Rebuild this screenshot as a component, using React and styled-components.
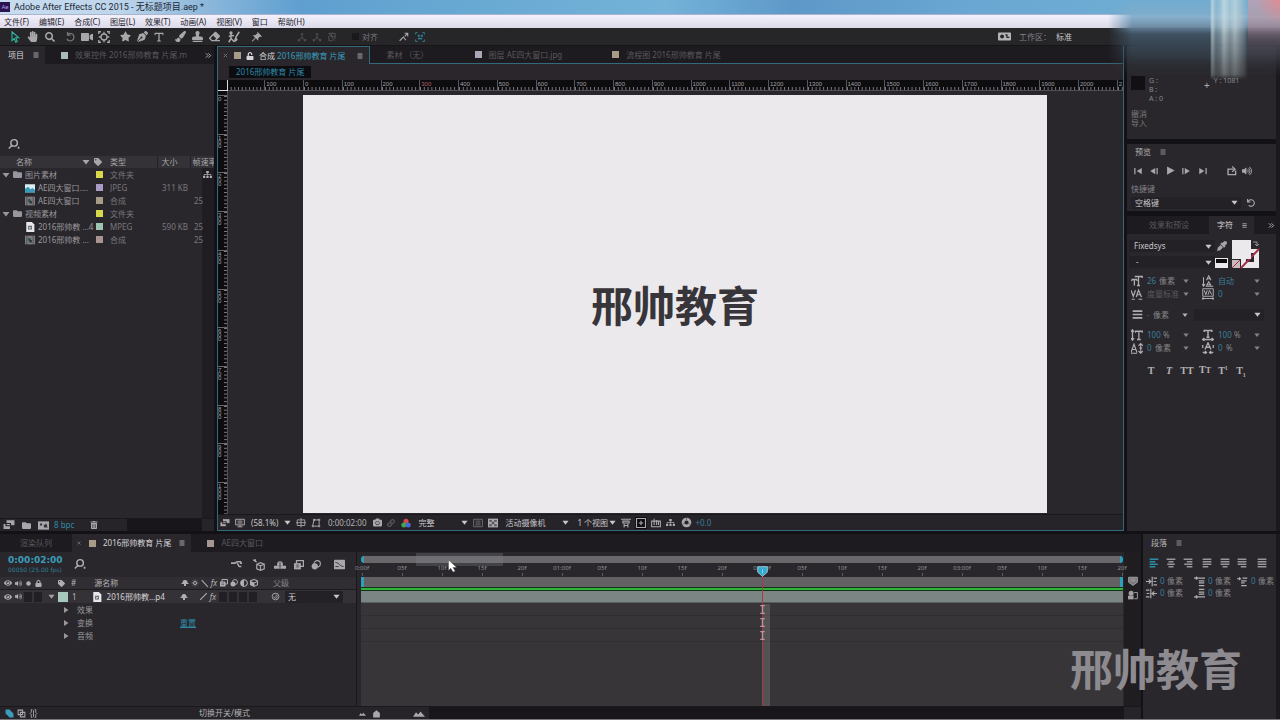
import React from "react";
import styled, { createGlobalStyle, css } from "styled-components";
import {
  FaHandPaper, FaSearch, FaStar, FaPenNib, FaPaintBrush, FaStamp, FaEraser, FaThumbtack, FaVideo,
  FaFolder, FaTrashAlt, FaVolumeUp, FaEye, FaTag, FaLock, FaUnlock, FaCamera, FaSitemap, FaCube,
  FaEyeDropper, FaUndo, FaLink, FaAdjust,
} from "react-icons/fa";

const c = {
  panel: "#29272b",
  tabs: "#1d1b1f",
  gap: "#121115",
  line: "#1b191d",
  text: "#b4b2b6",
  bright: "#d6d4d8",
  dim: "#5a585c",
  mid: "#858387",
  teal: "#3a9dbb",
  edge: "#34697c",
  track: "#373538",
};

const Global = createGlobalStyle`
  * { box-sizing: border-box; }
  body { margin: 0; background: ${c.gap}; }
  body, button, input, select {
    font-family: "Noto Sans", "Noto Sans CJK SC", sans-serif;
    font-size: 8px;
    line-height: 12px;
    color: ${c.text};
  }
  button, input, select { margin: 0; padding: 0; border: 0; background: none; outline: none; }
  svg { display: block; flex: none; }
`;

const Page = styled.div`
  position: relative;
  display: flex;
  flex-direction: column;
  min-height: 100vh;
  overflow: hidden;
  border-bottom: 1px solid #77757a;
`;

const TitleBar = styled.header`
  display: flex;
  align-items: center;
  gap: 4px;
  height: 14px;
  color: #1c2836;
  font-family: Roboto, "Noto Sans CJK SC", sans-serif;
  font-size: 9px;
  white-space: nowrap;
  background: linear-gradient(90deg, #c8dcef 0, #bdd5eb 120px, #8fb9dc 200px, #5f9fd0 300px, #69aad3 38%, #74b2d8 52%, #5e98c9 62%, #6aa7d2 76%, #72b2d6 100%);
`;
const AppBadge = styled.span`
  width: 10px;
  height: 10px;
  margin-bottom: 1px;
  background: #2a1450;
  color: #b49be6;
  font-size: 6px;
  line-height: 10px;
  text-align: center;
`;
const MenuBar = styled.nav`
  display: flex;
  align-items: center;
  gap: 10px;
  height: 14px;
  padding-left: 4px;
  border-top: 1px solid #aab4d0;
  background: linear-gradient(#f2f1fb, #dcd9e9);
`;
const MenuItem = styled.button`
  color: #26242c;
  white-space: nowrap;
`;

const ToolBar = styled.div`
  display: flex;
  align-items: center;
  height: 18px;
  padding-left: 6px;
  background: #262528;
  border-bottom: 1px solid #151417;
`;
const IconButton = styled.button`
  flex: none;
  display: flex;
  align-items: center;
  justify-content: center;
  width: ${(p) => p.$w || 16}px;
  height: 12px;
  color: ${(p) => p.$color || "#a9a7ab"};
`;
const Space = styled.span`
  flex: ${(p) => (p.$w ? `0 0 ${p.$w}px` : "1")};
`;
const Caption = styled.span`
  white-space: nowrap;
  color: ${(p) => p.$color || c.text};
`;
const CheckLabel = styled.label`
  display: flex;
  align-items: center;
  gap: 3px;
  color: #78767a;
  input { appearance: none; width: 7px; height: 7px; background: #1a181b; }
`;

const SelectBox = styled.label`
  flex: ${(p) => (p.$w ? `0 0 ${p.$w}px` : "1")};
  display: flex;
  align-items: center;
  min-width: 0;
  height: 12px;
  padding: 0 3px 0 ${(p) => p.$pad || 0}px;
  color: #c8c6ca;
  background: ${(p) => (p.$dark ? "#232125" : "none")};
  select { appearance: none; flex: 1; min-width: 0; color: ${(p) => p.$color || "#c8c6ca"}; }
`;

const Upper = styled.main`
  flex: 1;
  display: grid;
  grid-template-columns: 214px minmax(0, 1fr) 153px;
  gap: 3px;
  padding-bottom: 3px;
`;
const Panel = styled.section`
  display: flex;
  flex-direction: column;
  min-width: 0;
  background: ${c.panel};
  ${(p) => p.$grow && css`flex: 1;`}
`;
const TabStrip = styled.div`
  display: flex;
  align-items: stretch;
  height: 18px;
  background: ${c.tabs};
`;
const Tab = styled.button`
  flex: none;
  display: flex;
  align-items: center;
  gap: ${(p) => p.$gap || 7}px;
  padding: 0 ${(p) => p.$pr || 6}px 0 ${(p) => p.$pl || 8}px;
  white-space: nowrap;
  color: ${(p) => (p.$active ? c.bright : c.dim)};
  background: ${(p) => (p.$active ? c.panel : "none")};
  ${(p) => p.$framed && css`
    border-bottom: 1px solid ${c.edge};
  `}
  ${(p) => p.$framed && p.$active && css`
    border: solid ${c.edge};
    border-width: 1px 1px 0 0;
  `}
`;
const StripRest = styled.div`
  flex: 1;
  display: flex;
  align-items: center;
  justify-content: flex-end;
  ${(p) => p.$framed && css`border-bottom: 1px solid ${c.edge};`}
`;
const Chip = styled.span`
  flex: none;
  display: inline-block;
  width: ${(p) => p.$s || 7}px;
  height: ${(p) => p.$s || 7}px;
  background: ${(p) => p.$c};
`;
const Teal = styled.span`
  color: ${c.teal};
`;

const SearchRow = styled.label`
  display: flex;
  align-items: center;
  gap: 2px;
  height: 24px;
  padding-left: 8px;
  color: ${c.text};
  input { flex: 1; min-width: 0; }
`;
const Thumb = styled.div`
  height: 68px;
`;
const FileArea = styled.div`
  flex: 1;
  background: linear-gradient(to left, #1f1d21 12px, transparent 12px);
`;
const FileTable = styled.table`
  width: 100%;
  table-layout: fixed;
  border-collapse: collapse;
  th, td { height: 13px; padding: 0; font-weight: 400; text-align: left; white-space: nowrap; overflow: hidden; line-height: 12px; }
  th { height: 12px; background: #343236; color: #a8a6aa; }
  td { color: #79777b; }
  th:nth-child(n+4) { border-left: 1px solid #232125; padding-left: 4px; }
  th:last-child { padding-left: 2px; }
  td:nth-child(2) { padding-left: 2px; }
  td:nth-child(4) { padding-left: 5px; }
  td:nth-child(5) { padding-left: 4px; }
`;
const NameCell = styled.div`
  display: flex;
  align-items: center;
  gap: 3px;
  padding-left: ${(p) => (p.$child ? 25 : 2)}px;
  color: #99979b;
`;
const HeadCell = styled.div`
  display: flex;
  align-items: center;
  justify-content: space-between;
  padding: 0 4px 0 16px;
`;
const TreeCell = styled.div`
  display: flex;
  justify-content: space-between;
  align-items: center;
  padding-right: 2px;
  svg { color: #b0aeb2; }
`;
const FootBar = styled.div`
  flex: none;
  display: flex;
  align-items: center;
  height: ${(p) => p.$h || 13}px;
  overflow: hidden;
  background: #262428;
  border-top: 1px solid #1a181b;
`;
const DarkBar = styled.span`
  flex: ${(p) => (p.$w ? `0 0 ${p.$w}px` : "1")};
  align-self: stretch;
  background: #18161a;
`;

const CompPanel = styled(Panel)`
  border: solid ${c.edge};
  border-width: 0 1px 1px 1px;
`;
const Crumbs = styled.div`
  display: flex;
  align-items: center;
  height: 16px;
  padding-left: 11px;
  background: #2b262c;
  button { height: 12px; padding: 0 7px; background: #0c0d11; color: #2f87a5; white-space: nowrap; }
`;
const Rulers = styled.div`
  flex: 1;
  display: grid;
  grid-template-columns: 10px minmax(0, 1fr);
  grid-template-rows: 11px minmax(420px, 1fr);
`;
const Corner = styled.div`
  border: solid #dddbdf;
  border-width: 0 1px 1px 0;
  background: #0d0c0f;
`;
const RulerX = styled.div`
  overflow: hidden;
  background: #0d0c0f;
  border-bottom: 1px solid #504e52;
`;
const RulerXTrack = styled.div`
  display: flex;
  height: 10px;
  margin: 0 76px 0 75px;
`;
const MarkX = styled.span`
  flex: 0 0 calc(100% / 19.2);
  height: 10px;
  padding-left: 1px;
  border-left: 1px solid #59575b;
  font-family: "Liberation Sans", sans-serif;
  font-size: 6px;
  line-height: 8px;
  color: ${(p) => (p.$hot ? "#b0606c" : "#a2a0a4")};
  background: linear-gradient(90deg, #807e82 1px, transparent 1px) 0 100% / 10% 3px repeat-x;
  &:first-child { margin-left: calc(-200% / 19.2); }
`;
const RulerY = styled.div`
  overflow: hidden;
  background: #0d0c0f;
  border-right: 1px solid #504e52;
`;
const RulerYTrack = styled.div`
  display: flex;
  flex-direction: column;
  height: calc(100% - 5px);
  margin-top: 4px;
`;
const MarkY = styled.span`
  flex: 0 0 calc(100% / 10.8);
  padding-top: 1px;
  border-top: 1px solid #6a686c;
  background: linear-gradient(#807e82 1px, transparent 1px) 100% 0 / 3px 10% repeat-y;
  color: #a2a0a4;
  font-family: "Liberation Sans", sans-serif;
  font-size: 6px;
  line-height: 4px;
  span { display: block; width: 4px; word-break: break-all; }
`;
const Viewport = styled.div`
  display: flex;
  padding: 4px 76px 1px 75px;
`;
const Canvas = styled.div`
  flex: 1;
  display: flex;
  align-items: center;
  justify-content: center;
  background: #ece9ec;
  color: #37353a;
  font-family: "Noto Sans CJK SC", sans-serif;
  font-size: 42px;
  font-weight: 700;
  line-height: 48px;
`;

const RightColumn = styled.aside`
  display: flex;
  flex-direction: column;
  gap: 5px;
  border-right: 4px solid #1b191d;
`;
const InfoBody = styled.div`
  display: grid;
  grid-template-columns: 14px 51px auto 1fr;
  column-gap: 4px;
  padding: 30px 4px 0 4px;
  height: 93px;
  align-content: start;
  color: #8a888c;
  font-size: 7px;
  line-height: 9px;
`;
const InfoSwatch = styled.span`
  height: 14px;
  background: #121013;
`;
const Cross = styled.span`
  font-size: 10px;
  line-height: 18px;
  color: #b0aeb2;
`;
const History = styled.div`
  grid-column: 1 / -1;
  margin-top: 6px;
  font-size: 8px;
  color: #79777b;
`;
const PanelTitle = styled.h2`
  display: flex;
  align-items: center;
  gap: 8px;
  height: ${(p) => p.$h || 16}px;
  margin: 0;
  padding-left: 8px;
  font-size: 8px;
  font-weight: 400;
  color: ${c.text};
`;
const Row = styled.div`
  display: flex;
  align-items: center;
  height: ${(p) => p.$h || 13}px;
  padding-left: ${(p) => p.$pl || 0}px;
  margin-top: ${(p) => p.$mt || 0}px;
`;
const PreviewPanel = styled(Panel)`
  padding-bottom: 2px;
`;
const FontPick = styled.div`
  display: grid;
  grid-template-columns: 86px 1fr;
  padding: 4px 0 0 2px;
`;
const FontSelects = styled.div`
  display: flex;
  flex-direction: column;
  gap: 4px;
  padding: 2px 0;
  label { flex: none; }
`;
const FieldGrid = styled.div`
  display: grid;
  grid-template-columns: 71px 71px;
  grid-auto-rows: 13px;
  margin-top: ${(p) => p.$mt}px;
  padding-left: 2px;
`;
const Field = styled.label`
  display: flex;
  align-items: center;
  gap: 2px;
  white-space: nowrap;
  color: ${c.mid};
  input { width: ${(p) => p.$w || 6}px; color: ${(p) => p.$color || "#3c7c9c"}; }
  > svg { margin: 0 11px 0 auto; }
`;
const Glyph = styled.span`
  flex: none;
  display: flex;
  align-items: center;
  justify-content: center;
  width: ${(p) => p.$w || 16}px;
  color: #b0aeb2;
`;
const StyleButton = styled.button`
  width: 18px;
  font-family: "Liberation Serif", serif;
  font-size: 10px;
  font-weight: 700;
  color: #b4b2b6;
  font-style: ${(p) => (p.$italic ? "italic" : "normal")};
  sub, sup { font-size: 6px; line-height: 0; }
`;

const Lower = styled.div`
  display: grid;
  grid-template-columns: minmax(0, 1fr) 137px;
  gap: 2px;
`;
const TimelineBody = styled.div`
  display: grid;
  grid-template-columns: 357px minmax(0, 1fr) 17px;
`;
const LayerSide = styled.div`
  border-right: 1px solid #18161a;
`;
const TimeHead = styled.div`
  display: flex;
  align-items: center;
  height: 25px;
  padding-left: 8px;
`;
const TimeCode = styled.div`
  width: 66px;
  color: ${c.teal};
  font-family: "DejaVu Sans", sans-serif;
  font-size: 9px;
  font-weight: 700;
  line-height: 11px;
  small { display: block; font-size: 6px; font-weight: 400; line-height: 8px; color: #2f7e9a; white-space: nowrap; }
`;
const LayerSearch = styled(SearchRow)`
  flex: 1;
  padding-left: 0;
`;
const LayerRow = styled.div`
  display: flex;
  align-items: center;
  height: 13px;
  padding-left: 3px;
  background: ${(p) => (p.$head ? "#302e32" : p.$on ? "#343236" : "none")};
  border-bottom: ${(p) => (p.$head ? "1px solid #1d1b1e" : "0")};
  color: #a3a1a5;
`;
const Box = styled.span`
  flex: none;
  width: ${(p) => p.$w || 10}px;
  height: 10px;
  border: solid #343236;
  border-width: 0 1px;
  background: #211f23;
`;
const PropRow = styled.div`
  display: grid;
  grid-template-columns: 15px 103px 1fr;
  align-items: center;
  height: 13px;
  padding-left: 62px;
  color: #99979b;
  a { color: #2f87a5; }
`;
const Filler = styled.div`
  min-height: 64px;
`;

const TrackSide = styled.div`
  position: relative;
  display: flex;
  flex-direction: column;
  padding: 4px 1px 0 4px;
`;
const Navigator = styled.div`
  height: 7px;
  border: solid #2ba0b8;
  border-width: 0 3px;
  border-radius: 3px;
  background: #69676a;
`;
const TimeRuler = styled.div`
  display: grid;
  grid-template-columns: repeat(19, minmax(0, 1fr)) 0;
  height: 14px;
  padding: 0 1px;
`;
const TimeMark = styled.span`
  display: flex;
  flex-direction: column;
  align-items: center;
  width: 40px;
  margin-left: -20px;
  color: #918f94;
  font-size: 6px;
  line-height: 10px;
  &::after { content: ""; width: 1px; height: 3px; background: #5c5a5e; }
`;
const WorkArea = styled.div`
  height: 10px;
  border: solid #2ba0b8;
  border-width: 0 3px;
  background: #646164;
`;
const CacheLine = styled.div`
  height: 4px;
  border: solid #123015;
  border-width: 1px 0;
  background: #2fb33c;
`;
const ClipBar = styled.div`
  height: 12px;
  background: #7b8584;
  border-bottom: 1px solid #55605f;
`;
const Lane = styled.div`
  height: 13px;
  background: ${c.track};
  border-bottom: 1px solid #302e31;
`;
const LaneRest = styled.div`
  flex: 1;
  background: ${c.track};
`;
const Playhead = styled.div`
  position: absolute;
  top: 14px;
  bottom: 0;
  left: calc((100% - 7px) * 10 / 19);
  width: 13px;
  padding-right: 2px;
  display: flex;
  flex-direction: column;
  align-items: center;
  background:
    linear-gradient(90deg, transparent 6px, rgba(255,255,255,0.14) 6px) 0 38px / 100% 100% no-repeat,
    linear-gradient(90deg, transparent 5px, #a8394a 5px, #a8394a 6px, transparent 6px);
  svg + svg { margin-top: 28px; }
  svg + svg + svg { margin-top: 4px; }
`;
const HoverGhost = styled.div`
  position: absolute;
  top: 1px;
  left: 59px;
  width: 87px;
  height: 13px;
  background: rgba(130, 128, 132, 0.3);
`;
const Cursor = styled.div`
  position: absolute;
  top: 8px;
  left: 90px;
`;
const SideIcons = styled.div`
  display: flex;
  flex-direction: column;
  align-items: center;
  gap: 4px;
  padding-top: 24px;
  background: #1f1d20;
  color: #a3a1a5;
`;
const Paragraph = styled(Panel)`
  border-right: 4px solid #1b191d;
`;
const AlignRow = styled.div`
  display: flex;
  align-items: center;
  height: 22px;
  padding-left: 2px;
`;
const Indents = styled.div`
  display: grid;
  grid-template-columns: 48px 43px 43px;
  grid-auto-rows: 12px;
  padding: 1px 0 0 1px;
`;
const IndentField = styled.label`
  display: flex;
  align-items: center;
  gap: 1px;
  white-space: nowrap;
  color: ${c.mid};
  input { width: 6px; color: #3c7c9c; }
`;

const Glare = styled.div`
  position: absolute;
  top: 0;
  right: 0;
  width: 172px;
  height: 80px;
  pointer-events: none;
  background:
    radial-gradient(circle at 100% 0, rgba(240,130,130,0.7), transparent 24px),
    linear-gradient(180deg, rgba(205,160,172,0.7), rgba(190,135,145,0.5) 26px, rgba(120,75,84,0.35) 42px, transparent 70px) 100% 0 / 32px 100% no-repeat,
    linear-gradient(90deg, transparent, rgba(205,225,228,0.7) 2px, rgba(170,198,206,0.4) 6px, rgba(190,215,220,0.45) 10px, rgba(208,226,228,0.75) 14px, rgba(196,216,218,0.5) 20px, rgba(204,222,224,0.7) 25px, rgba(180,192,200,0.35) 34px, transparent) 102px 0 / 38px 100% no-repeat,
    linear-gradient(180deg, rgba(112,172,208,0.95), rgba(128,172,202,0.95) 17px, rgba(108,140,165,0.95) 26px, rgba(66,86,104,0.95) 34px, rgba(56,70,84,0.95) 54px, rgba(45,50,58,0.8) 66px, transparent 78px);
  mask-image: linear-gradient(90deg, transparent, #000 24px), linear-gradient(180deg, #000 30px, rgba(0,0,0,0.5) 74px, transparent 80px);
  mask-composite: intersect;
`;
const Watermark = styled.div`
  position: absolute;
  right: 38px;
  bottom: 24px;
  color: #8d8b90;
  font-family: "Noto Sans CJK SC", sans-serif;
  font-size: 43px;
  font-weight: 700;
  line-height: 56px;
  pointer-events: none;
`;

/* Line and fill drawings on a 16-unit grid. */
const shapes = {
  arrow: <path d="M4 1v12l3-3 2 5 2-1-2-5h4z" fill="none" stroke="currentColor" strokeWidth="1.5" />,
  rotate: <path d="M4 4a6 6 0 1 1-1 7M4 0v5h5" fill="none" stroke="currentColor" strokeWidth="2" />,
  pan: <g fill="none" stroke="currentColor" strokeWidth="1.7"><path d="M1 4V1h3M12 1h3v3M15 12v3h-3M4 15H1v-3" /><circle cx="8" cy="8" r="4" /><path d="M8 1v3M8 12v3M1 8h3M12 8h3" /></g>,
  type: <path d="M1 1h14v4h-1l-1-2H9v10l2 1v1H5v-1l2-1V3H3L2 5H1z" fill="currentColor" />,
  roto: <g><circle cx="4" cy="2.500" r="2.200" fill="currentColor" /><path d="M4 4v6l-3 5M4 10l4 4M1 7l7-1M15 1l-5 8" fill="none" stroke="currentColor" strokeWidth="2" /><path d="M10 8l3 3c-1 3-4 4-6 4 2-2 1-5 3-7z" fill="currentColor" /></g>,
  pin: <path d="M9 0l7 7-2 1-1-1-3 3v4l-4-4-5 5-1 0 0-1 5-5-4-4h4l4-3-1-1z" fill="currentColor" />,
  axis: <path d="M8 2v7L2 14M8 9l6 5M6 4l2-2 2 2M2 11v3h3M11 14h3v-3" fill="none" stroke="currentColor" strokeWidth="1.4" />,
  cubeAxis: <path d="M3 2h10v9M3 2l9 12M3 6v8h6M7 2v5h6" fill="none" stroke="currentColor" strokeWidth="1.4" />,
  snap: <path d="M1 14l6-6 4 5M9 2h5v5M14 2L9 7" fill="none" stroke="currentColor" strokeWidth="1.7" />,
  dots: <path d="M1 4V1h3M12 1h3v3M15 12v3h-3M4 15H1v-3M5 5h2v2H5zM10 5h2v2h-2zM5 10h6v1H5z" fill="none" stroke="currentColor" strokeWidth="1.5" />,
  gear: <g><rect y="3" width="16" height="10" rx="1" fill="currentColor" /><circle cx="5" cy="8" r="2.4" fill="#262528" /><path d="M9 6h2v3h3" fill="none" stroke="#262528" strokeWidth="1.5" /></g>,
  menu: <path d="M3 4h10M3 8h10M3 12h10" stroke="currentColor" strokeWidth="1.5" />,
  close: <path d="M4 4l8 8M12 4l-8 8" stroke="#77757a" strokeWidth="2" />,
  more: <path d="M2 3l5 5-5 5M8 3l5 5-5 5" fill="none" stroke="#c0bec2" strokeWidth="2" />,
  down: <path d="M1 4h14l-7 9z" fill="currentColor" />,
  right: <path d="M4 2l9 6-9 6z" fill="currentColor" />,
  find: <g fill="none" stroke="currentColor" strokeWidth="1.800"><circle cx="7.500" cy="6" r="4" /><path d="M5 9L1 13" /><path d="M12 12h2" strokeWidth="2.400" /></g>,
  image: <g><rect y="2" width="16" height="13" fill="#d8eef2" /><path d="M0 15V9l5-3 4 4 3-2 4 3v4z" fill="#3b9ab5" /></g>,
  comp: <g><rect x="0" y="1" width="16" height="14" fill="#7e7c80" /><path d="M3 1v14M13 1v14" stroke="#333" strokeWidth="1" /><circle cx="7" cy="7" r="2.500" fill="#315848" /><rect x="7" y="8" width="4" height="4" fill="#2b3833" /></g>,
  doc: <g><path d="M2 0h9l4 4v12H2z" fill="#e8e6ea" /><path d="M5 6h6v6H5z" fill="#55606a" /><path d="M7 7l3 2-3 2z" fill="#fff" /></g>,
  stack: <path d="M4 1h12v8H4zM0 6h10v8H0z" fill="currentColor" stroke="#262428" strokeWidth="1.5" />,
  film: <g><rect y="2" width="16" height="12" fill="currentColor" /><path d="M3 5h3v3H3zM8 8l4-3 2 6H9z" fill="#333136" /></g>,
  monitor: <path d="M1 2h14v9H1zM4 14h8M8 11v3M4 5h8M4 8h8" fill="none" stroke="currentColor" strokeWidth="1.6" />,
  guides: <path d="M2 3h12v9H2zM8 0v15M0 7.500h16" fill="none" stroke="currentColor" strokeWidth="1.400" />,
  mask: <g fill="none" stroke="currentColor" strokeWidth="1.600"><path d="M3 11L5 3h8M5 13h6M13 5v6" /><path d="M2 12h2v2H2zM4 2h2v2H4zM12 2h2v2h-2zM12 12h2v2h-2z" /></g>,
  rgb: <g><circle cx="8" cy="5" r="4" fill="#d84848" /><circle cx="4.500" cy="11" r="4" fill="#3fa84e" /><circle cx="11.500" cy="11" r="4" fill="#4868d8" /></g>,
  region: <path d="M1 2h14v12H1zM4 5h8M4 8h8M4 11h8" fill="none" stroke="currentColor" strokeWidth="1.300" />,
  checker: <g><rect y="1" width="16" height="14" fill="currentColor" /><path d="M2 3h4v3H2zM10 3h4v3h-4zM6 6h4v4H6zM2 10h4v3H2zM10 10h4v3h-4z" fill="#565458" /></g>,
  par: <path d="M0 2h16M3 5h10v3H3zM5 9v6M11 9v6M5 12h6" fill="none" stroke="currentColor" strokeWidth="1.800" />,
  fast: <g><rect width="16" height="16" fill="#0c0b0d" /><path d="M2 2h12v12H2zM8 5v6M5 8h6" fill="none" stroke="currentColor" strokeWidth="1.500" /></g>,
  chart: <path d="M1 5h14v9H1zM5 1v10M9 3v8M12 6v5" fill="none" stroke="currentColor" strokeWidth="1.700" />,
  aperture: <g fill="none" stroke="currentColor"><circle cx="8" cy="8" r="5" strokeWidth="4" /><path d="M8 1v4M2 11l4-2M14 11l-4-2" stroke="#55535a" strokeWidth="1" /></g>,
  flow: <path d="M0 6h7M5 6l4-2h6M9 6l3 5h3M13 6h3" fill="none" stroke="currentColor" strokeWidth="2.200" />,
  draft: <g fill="none" stroke="currentColor" strokeWidth="1.600"><path d="M5 7l5-2 5 2v6l-5 2-5-2zM5 7l5 2 5-2M10 9v6" /><path d="M0 1l5 3M3 0v4" /></g>,
  hide: <g fill="currentColor"><path d="M4 8a4 5 0 0 1 8 0v1H4z" /><path d="M0 9h16v4H0z" /><path d="M8 4v9" stroke="#29272b" /></g>,
  shy: <g fill="currentColor"><path d="M3 7a5 5 0 0 1 10 0v2H3z" /><path d="M1 8h14v2H1zM6 10h4v4H6z" /></g>,
  frames: <g><path d="M4 1h11v9H4z" fill="none" stroke="currentColor" strokeWidth="2" /><path d="M0 5h11v10H0z" fill="currentColor" /><path d="M3 8h5M3 11h5" stroke="#302e32" /></g>,
  blur: <g><circle cx="6" cy="10" r="5" fill="currentColor" /><circle cx="10" cy="6" r="5" fill="none" stroke="currentColor" strokeWidth="1.800" /></g>,
  graph: <g><rect y="1" width="16" height="14" rx="1" fill="currentColor" /><path d="M2 5c6 0 6 6 12 6M2 11h5" fill="none" stroke="#333136" strokeWidth="1.300" /></g>,
  dot: <circle cx="8" cy="8" r="4" fill="currentColor" />,
  sun: <g fill="none" stroke="currentColor"><circle cx="8" cy="8" r="3" strokeWidth="2" /><path d="M8 1v14M1 8h14M3 3l10 10M13 3L3 13" strokeWidth="1" strokeDasharray="3 8" /></g>,
  back: <path d="M3 2l11 12" stroke="currentColor" strokeWidth="1.800" />,
  slash: <path d="M14 2L2 14" stroke="currentColor" strokeWidth="1.800" />,
  spiral: <g fill="none" stroke="currentColor" strokeWidth="1.500"><circle cx="8" cy="8" r="6" /><path d="M8 5a3 3 0 1 1-3 3M8 8h1" /></g>,
  layers: <path d="M1 1h7l3 3v7H4L1 8zM5 5h7l3 3v7H8l-3-3z" fill="currentColor" />,
  toggles: <path d="M2 2h8v8H2zM6 6h8v8H6z" fill="none" stroke="currentColor" strokeWidth="1.800" />,
  braces: <path d="M6 1H4v5L2 8l2 2v5h2M10 1h2v5l2 2-2 2v5h-2M8 2v12" fill="none" stroke="currentColor" strokeWidth="1.600" />,
  hill: <path d="M0 13l4-6 3 3 3-4 6 7z" fill="currentColor" />,
  knob: <path d="M2 15V7l6-5 6 5v8z" fill="currentColor" />,
  head: <path d="M1 1h14v8l-7 6-7-6zM8 5v6" fill="#35a9cd" stroke="#bfe6f2" strokeWidth="1" />,
  beam: <path d="M4 1h8M8 1v14M4 15h8" stroke="#c98f99" strokeWidth="2.500" fill="none" />,
  bin: <path d="M1 2h14v8l-7 5-7-5zM4 5h8M4 8h8" fill="#79777b" stroke="currentColor" strokeWidth="1.500" />,
  compBtn: <g fill="currentColor"><circle cx="5" cy="5" r="4" /><path d="M0 9h9v6H0z" /><path d="M10 4h5v10h-5" fill="none" stroke="currentColor" strokeWidth="1.500" /></g>,
  first: <path d="M2 3h2v10H2zM14 3v10L6 8z" fill="currentColor" />,
  prev: <path d="M12 3h2v10h-2zM10 3v10L2 8z" fill="currentColor" />,
  play: <path d="M3 2l11 6-11 6z" fill="currentColor" />,
  next: <path d="M2 3h2v10H2zM6 3l8 5-8 5z" fill="currentColor" />,
  last: <path d="M12 3h2v10h-2zM2 3l8 5-8 5z" fill="currentColor" />,
  loop: <path d="M3 6v8h11V8M2 6h9M9 2l4 4-4 4" fill="none" stroke="currentColor" strokeWidth="2" />,
  sizeT: <path d="M1 6h7M4.500 6v8M5 2h10v2M10 2v12M8 14h4M1 6v2M8 6v2" fill="none" stroke="currentColor" strokeWidth="1.700" />,
  leading: <path d="M6 7l3-6 3 6M7 5h4M6 14l3-5 3 5M7 13h4M2 3v11M0 12l2 3 2-3M5 15h10" fill="none" stroke="currentColor" strokeWidth="1.400" />,
  kern: <path d="M0 3l3 8 3-8M7 12l3-9 4 9M8 9h5M1 15h4M10 15h5" fill="none" stroke="currentColor" strokeWidth="1.600" />,
  track: <path d="M1 1h14v10H1zM3 3l2 6 2-6M8 9l2-6 3 6M0 14h16M2 12l-2 2 2 2M14 12l2 2-2 2" fill="none" stroke="currentColor" strokeWidth="1.300" />,
  lines: <path d="M1 3h14M1 8h14M1 13h14" stroke="currentColor" strokeWidth="2.400" />,
  vscale: <path d="M2 2v12M0 4l2-3 2 3M0 12l2 3 2-3M6 5V3h9v2M10.500 3v11M8 14h5" fill="none" stroke="currentColor" strokeWidth="1.700" />,
  hscale: <path d="M3 4V2h10v2M8 2v9M6 11h4M1 14h14M3 12l-2 2 2 2M13 12l2 2-2 2" fill="none" stroke="currentColor" strokeWidth="2" />,
  shift: <path d="M0 14L4 3l4 11M2 10h5M0 15h8M13 2v12M10 5l3-3 3 3M11 8h4M10 12l3 3 3-3" fill="none" stroke="currentColor" strokeWidth="1.500" />,
  tsume: <path d="M4 10l4-9 4 9M6 7h4M1 4v4M15 4v4M1 14h5M15 14h-5M4 12l2 2-2 2M12 12l-2 2 2 2" fill="none" stroke="currentColor" strokeWidth="1.700" />,
  alignL: <path d="M1 2h14M1 6h9M1 10h13M1 14h9" stroke="currentColor" strokeWidth="2.200" />,
  alignC: <path d="M1 2h14M4 6h8M2 10h12M4 14h8" stroke="currentColor" strokeWidth="2.200" />,
  alignR: <path d="M1 2h14M6 6h9M2 10h13M6 14h9" stroke="currentColor" strokeWidth="2.200" />,
  justL: <path d="M1 2h14M1 6h14M1 10h14M1 14h9" stroke="currentColor" strokeWidth="2.200" />,
  justC: <path d="M1 2h14M1 6h14M1 10h14M4 14h8" stroke="currentColor" strokeWidth="2.200" />,
  justR: <path d="M1 2h14M1 6h14M1 10h14M6 14h9" stroke="currentColor" strokeWidth="2.200" />,
  just: <path d="M1 2h14M1 6h14M1 10h14M1 14h14" stroke="currentColor" strokeWidth="2.200" />,
  indL: <path d="M0 8h6M4 5l3 3-3 3M9 1v14M11 3h5M11 8h4M11 13h5" fill="none" stroke="currentColor" strokeWidth="1.700" />,
  indR: <path d="M16 8h-6M12 5L9 8l3 3M7 1v14M0 3h5M1 8h4M0 13h5" fill="none" stroke="currentColor" strokeWidth="1.700" />,
  spB: <path d="M0 3h5M3 1l2 2-2 2M6 3h10M7 7h8M7 10h8M7 14h8" fill="none" stroke="currentColor" strokeWidth="1.900" />,
  spA: <path d="M0 13h5M3 11l2 2-2 2M6 13h10M7 2h8M7 6h8M7 9h8" fill="none" stroke="currentColor" strokeWidth="1.900" />,
  indF: <path d="M0 4h5M3 2l2 2-2 2M8 3h7M6 7h8M6 10h5M6 14h8" fill="none" stroke="currentColor" strokeWidth="1.700" />,
  pointer: <path d="M2 0v14l3-3 3 5 3-1-3-5h5z" fill="#fff" stroke="#333" strokeWidth="0.500" />,
};
const I = ({ n, s = 10 }) => (
  <svg width={s} height={s} viewBox="0 0 16 16" aria-hidden="true">{shapes[n]}</svg>
);
const Btn = ({ n, icon: Ico, s = 10, label, ...rest }) => (
  <IconButton type="button" aria-label={label || n} {...rest}>{Ico ? <Ico size={s} /> : <I n={n} s={s} />}</IconButton>
);
const Drop = ({ label, options, size = 7, ...rest }) => (
  <SelectBox {...rest}>
    <select aria-label={label}>{options.map((o) => <option key={o}>{o}</option>)}</select>
    {size > 0 && <I n="down" s={size} />}
  </SelectBox>
);

const menus = ["文件(F)", "编辑(E)", "合成(C)", "图层(L)", "效果(T)", "动画(A)", "视图(V)", "窗口", "帮助(H)"];
const tools = [
  ["arrow", null, 18, 12, "#2fb39b"], ["hand", FaHandPaper, 16, 11], ["zoom", FaSearch, 20, 10], ["rotate", null, 20, 10, "#77757a"],
  ["camera", FaVideo, 14, 12], ["pan", null, 20, 12], ["star", FaStar, 22, 11], ["pen", FaPenNib, 12, 11],
  ["type", null, 22, 10], ["brush", FaPaintBrush, 20, 11], ["stamp", FaStamp, 14, 11], ["eraser", FaEraser, 20, 11],
  ["roto", null, 20, 12], ["pin", null, 26, 10],
];
const files = [
  { dir: true, name: "图片素材", tag: "#d8d84c", type: "文件夹" },
  { icon: "image", name: "AE四大窗口....", tag: "#a99bc4", type: "JPEG", size: "311 KB" },
  { icon: "comp", name: "AE四大窗口", tag: "#a89c88", type: "合成", fps: "25" },
  { dir: true, name: "视频素材", tag: "#d8d84c", type: "文件夹" },
  { icon: "doc", name: "2016邢帅教 ...4", tag: "#9cc4b0", type: "MPEG", size: "590 KB", fps: "25" },
  { icon: "comp", name: "2016邢帅教 ...", tag: "#a89490", type: "合成", fps: "25" },
];
const xMarks = ["", 100, ...Array.from({ length: 22 }, (_, i) => i * 100)];
const yMarks = Array.from({ length: 11 }, (_, i) => i * 100);
const frames = Array.from({ length: 20 }, (_, i) => {
  const f = i % 5;
  if (f) return `${f === 1 ? "05" : f * 5}f`;
  return i ? `0${i / 5}:00f` : "0:00f";
});

const Project = () => (
  <Panel>
    <TabStrip>
      <Tab $active $gap={8} $pr={5}>项目 <I n="menu" s={8} /></Tab>
      <Tab $pl={16}><Chip $c="#a9bcbc" />效果控件 2016邢帅教育 片尾.m</Tab>
      <StripRest><Btn n="more" label="更多面板" s={7} $w={12} /></StripRest>
    </TabStrip>
    <Thumb />
    <SearchRow><I n="find" s={13} /><input aria-label="搜索项目" /></SearchRow>
    <FileArea>
      <FileTable>
        <colgroup><col width="94" /><col width="16" /><col width="47" /><col width="33" /><col /></colgroup>
        <thead>
          <tr>
            <th><HeadCell>名称 <I n="down" s={8} /></HeadCell></th>
            <th><FaTag size={8} /></th><th>类型</th><th>大小</th><th>帧速率</th>
          </tr>
        </thead>
        <tbody>
          {files.map((f, i) => (
            <tr key={i}>
              <td>
                <NameCell $child={!f.dir}>
                  {f.dir ? <><I n="down" s={8} /><FaFolder size={9} /></> : <I n={f.icon} s={10} />}
                  {f.name}
                </NameCell>
              </td>
              <td><Chip $c={f.tag} /></td>
              <td>{f.type}</td>
              <td>{f.size}</td>
              <td><TreeCell><span>{f.fps}</span>{i === 0 && <FaSitemap size={9} />}</TreeCell></td>
            </tr>
          ))}
        </tbody>
      </FileTable>
    </FileArea>
    <FootBar>
      <Btn n="stack" label="解释素材" s={12} $w={18} /><Btn icon={FaFolder} label="新建文件夹" s={9} /><Btn n="film" label="新建合成" s={11} $w={18} />
      <Space $w={2} /><Caption $color="#2f87a5">8 bpc</Caption>
      <Space $w={12} /><Btn icon={FaTrashAlt} label="删除" s={8} />
      <Space /><DarkBar $w={75} /><Space $w={12} />
    </FootBar>
  </Panel>
);

const Composition = () => (
  <CompPanel>
    <TabStrip>
      <Tab $active $framed $pl={4} $pr={5} $gap={5}>
        <I n="close" s={7} /><Chip $c="#a89c88" /><FaUnlock size={8} />
        <span>合成 <Teal>2016邢帅教育 片尾</Teal></span><Space $w={1} /><I n="menu" s={8} />
      </Tab>
      <Tab $framed $pl={16} $pr={45}>素材 （无）</Tab>
      <Tab $framed $pl={1} $pr={49}><Chip $c="#aaa8b8" />图层 AE四大窗口.jpg</Tab>
      <Tab $framed $pl={1}><Chip $c="#a89c88" />流程图 2016邢帅教育 片尾</Tab>
      <StripRest $framed />
    </TabStrip>
    <Crumbs><button type="button">2016邢帅教育 片尾</button></Crumbs>
    <Rulers>
      <Corner />
      <RulerX><RulerXTrack>{xMarks.map((m, i) => <MarkX key={i} $hot={m === 300}>{m}</MarkX>)}</RulerXTrack></RulerX>
      <RulerY><RulerYTrack>{yMarks.map((m) => <MarkY key={m}><span>{m}</span></MarkY>)}</RulerYTrack></RulerY>
      <Viewport><Canvas>邢帅教育</Canvas></Viewport>
    </Rulers>
    <FootBar $h={16}>
      <Btn n="stack" label="始终预览" $w={14} /><Btn n="monitor" label="主查看器" $w={16} /><Space $w={3} />
      <Drop label="放大率" options={["(58.1%)"]} $w={43} />
      <Btn n="guides" label="网格" $w={14} /><Btn n="mask" label="蒙版" $w={16} /><Space $w={4} />
      <Caption>0:00:02:00</Caption><Space $w={4} />
      <Btn icon={FaCamera} label="快照" s={9} $w={14} /><Btn icon={FaLink} label="显示快照" s={8} $w={14} $color="#5a585c" /><Btn n="rgb" label="通道" $w={15} /><Space $w={5} />
      <Drop label="分辨率" options={["完整"]} $w={53} />
      <Btn n="region" label="目标区域" $w={14} $color="#79777b" /><Btn n="checker" label="透明网格" $w={15} /><Space $w={5} />
      <Drop label="3D 视图" options={["活动摄像机"]} $w={67} /><Space $w={5} />
      <Drop label="视图布局" options={["1 个视图"]} $w={42} />
      <Btn n="par" label="像素长宽比" $w={14} /><Btn n="fast" label="快速预览" s={12} $w={15} /><Btn n="chart" label="时间轴" $w={15} /><Btn icon={FaSitemap} label="流程图" s={9} $w={14} />
      <Btn n="aperture" label="重置曝光度" s={11} $w={18} />
      <Caption $color="#3c7c9c">+0.0</Caption>
    </FootBar>
  </CompPanel>
);

const NumField = ({ icon, value, unit, w, color }) => (
  <Field $w={w} $color={color}>
    <Glyph><I n={icon} s={12} /></Glyph>
    <span><input aria-label={icon} defaultValue={value} />{unit}</span>
    <I n="down" s={6} />
  </Field>
);

const RightPanels = () => (
  <RightColumn>
    <Panel>
      <InfoBody>
        <InfoSwatch />
        <span>G :<br />B :<br />A : 0</span>
        <Cross>+</Cross>
        <span>Y : 1081</span>
        <History>撤消<br />导入</History>
      </InfoBody>
    </Panel>
    <PreviewPanel>
      <PanelTitle>预览 <I n="menu" s={8} /></PanelTitle>
      <Row $pl={2} $mt={4}>
        <Btn n="first" $w={17} s={10} /><Btn n="prev" $w={16} s={10} /><Btn n="play" $w={16} s={11} /><Btn n="next" $w={16} s={10} /><Btn n="last" $w={17} s={10} />
        <Space $w={12} /><Btn n="loop" $w={16} s={11} /><Btn icon={FaVolumeUp} label="静音" s={10} />
      </Row>
      <Row $pl={4} $mt={5}><Caption $color={c.mid}>快捷键</Caption></Row>
      <Row $mt={1} $pl={4}><Drop label="快捷键" options={["空格键"]} $w={110} $pad={4} $dark /><Btn icon={FaUndo} label="重置" s={8} $w={20} /></Row>
    </PreviewPanel>
    <Panel $grow>
      <TabStrip>
        <Tab $pl={22} $pr={20}>效果和预设</Tab>
        <Tab $active $gap={8}>字符 <I n="menu" s={7} /></Tab>
        <StripRest><Btn n="more" label="更多面板" s={7} $w={10} /></StripRest>
      </TabStrip>
      <FontPick>
        <FontSelects>
          <Drop label="字体" options={["Fixedsys"]} $pad={5} $dark /><Drop label="字体样式" options={["-"]} $pad={7} $dark />
        </FontSelects>
        <svg width="50" height="32" viewBox="0 0 50 32" role="img" aria-label="填充和描边">
          <rect x="0" y="20" width="13" height="10" fill="#ece9ec" /><rect x="1" y="21" width="11" height="4" fill="#0d0c0f" />
          <rect x="26" y="11" width="18" height="19" fill="#ece9ec" /><rect x="31" y="15" width="8" height="9" fill="#29272b" />
          <path d="M26 30L44 11" stroke="#a0304a" strokeWidth="2" />
          <rect x="17" y="22" width="8" height="8" fill="#cbb8bc" /><path d="M17 30l8-8" stroke="#a0304a" />
          <rect x="17" y="2" width="19" height="19" fill="#ece9ec" />
          <path d="M38 4h4v4M40 6l2 2 2-2" fill="none" stroke="#98969a" />
          <FaEyeDropper x="2" y="3" size={10} color="#a5a3a7" />
        </svg>
      </FontPick>
      <FieldGrid $mt={4}>
        <NumField icon="sizeT" value="26" unit=" 像素" w={10} /><NumField icon="leading" value="自动" w={20} />
        <NumField icon="kern" value="度量标准" w={32} color={c.dim} /><NumField icon="track" value="0" />
      </FieldGrid>
      <Row $mt={8} $pl={2}>
        <Field $color={c.dim}><Glyph><I n="lines" s={11} /></Glyph><span><input aria-label="描边宽度" defaultValue="-" />像素</span></Field>
        <Space $w={13} /><I n="down" s={6} /><Space $w={6} />
        <Drop label="描边样式" options={[""]} $w={70} $dark />
      </Row>
      <FieldGrid $mt={7}>
        <NumField icon="vscale" value="100" unit=" %" w={14} /><NumField icon="hscale" value="100" unit=" %" w={14} />
        <NumField icon="shift" value="0" unit=" 像素" /><NumField icon="tsume" value="0" unit=" %" />
      </FieldGrid>
      <Row $mt={10} $pl={15}>
        <StyleButton>T</StyleButton><StyleButton $italic>T</StyleButton><StyleButton>TT</StyleButton><StyleButton>T<small>T</small></StyleButton>
        <StyleButton>T<sup>1</sup></StyleButton><StyleButton>T<sub>1</sub></StyleButton>
      </Row>
    </Panel>
  </RightColumn>
);

const Timeline = () => (
  <Panel>
    <TabStrip>
      <Tab $pl={20} $pr={20}>渲染队列</Tab>
      <Tab $active $pl={4} $pr={5}><I n="close" s={6} /><Chip $c="#a89c88" />2016邢帅教育 片尾 <I n="menu" s={8} /></Tab>
      <Tab $pl={16}><Chip $c="#a89490" />AE四大窗口</Tab>
    </TabStrip>
    <TimelineBody>
      <LayerSide>
        <TimeHead>
          <TimeCode>0:00:02:00<small>00050 (25.00 fps)</small></TimeCode>
          <LayerSearch><I n="find" s={13} /><input aria-label="搜索图层" /></LayerSearch>
          <Btn n="flow" s={11} $w={24} /><Btn n="draft" s={12} $w={22} /><Btn n="hide" label="隐藏" s={12} $w={20} />
          <Btn n="frames" s={10} $w={17} /><Btn n="blur" s={10} $w={17} /><Space $w={4} /><Btn n="graph" s={11} $w={22} /><Space $w={6} />
        </TimeHead>
        <LayerRow $head>
          <Glyph $w={10}><FaEye size={8} /></Glyph><Glyph $w={10}><FaVolumeUp size={7} /></Glyph><Glyph $w={10}><I n="dot" s={9} /></Glyph><Glyph $w={10}><FaLock size={7} /></Glyph>
          <Space $w={13} /><Glyph $w={10}><FaTag size={7} /></Glyph><Space $w={5} /><Caption>#</Caption><Space $w={18} /><Caption>源名称</Caption><Space />
          <Glyph $w={10}><I n="shy" s={8} /></Glyph><Glyph $w={10}><I n="sun" s={8} /></Glyph><Glyph $w={9}><I n="back" s={9} /></Glyph><Glyph $w={10}><i>fx</i></Glyph>
          <Glyph $w={10}><I n="frames" s={8} /></Glyph><Glyph $w={10}><I n="blur" s={8} /></Glyph><Glyph $w={10}><FaAdjust size={8} /></Glyph><Glyph $w={10}><FaCube size={8} /></Glyph>
          <Space $w={14} /><Caption $color={c.mid}>父级</Caption><Space $w={67} />
        </LayerRow>
        <LayerRow $on>
          <Glyph $w={10}><FaEye size={8} /></Glyph><Glyph $w={10}><FaVolumeUp size={7} /></Glyph><Box /><Box />
          <Space $w={5} /><I n="down" s={7} /><Space $w={3} /><Chip $c="#a9c8bd" $s={10} /><Space $w={4} /><Caption>1</Caption>
          <Space $w={15} /><I n="doc" s={10} /><Space $w={5} /><Caption $color={c.bright}>2016邢帅教...p4</Caption><Space />
          <Glyph $w={10}><I n="shy" s={8} /></Glyph><Space $w={10} /><Glyph $w={9}><I n="slash" s={9} /></Glyph><Glyph $w={10}><i>fx</i></Glyph>
          <Box /><Box /><Box /><Box /><Space $w={12} /><Glyph $w={10}><I n="spiral" s={9} /></Glyph><Space $w={5} />
          <Drop label="父级" options={["无"]} $w={58} $pad={3} $dark /><Space $w={13} />
        </LayerRow>
        <PropRow><I n="right" s={8} />效果</PropRow>
        <PropRow><I n="right" s={8} /><span>变换</span><a href="#reset">重置</a></PropRow>
        <PropRow><I n="right" s={8} />音频</PropRow>
        <Filler />
      </LayerSide>
      <TrackSide>
        <Navigator />
        <TimeRuler>{frames.map((f, i) => <TimeMark key={i}>{f}</TimeMark>)}</TimeRuler>
        <WorkArea /><CacheLine /><ClipBar />
        <Lane /><Lane /><Lane /><LaneRest />
        <Playhead><I n="head" s={11} /><I n="beam" s={9} /><I n="beam" s={9} /><I n="beam" s={9} /></Playhead>
        <HoverGhost /><Cursor><I n="pointer" s={12} /></Cursor>
      </TrackSide>
      <SideIcons><I n="bin" s={10} /><I n="compBtn" s={10} /></SideIcons>
    </TimelineBody>
    <FootBar>
      <Space $w={3} /><Btn n="layers" s={9} $w={12} $color="#3a9dbb" /><Btn n="toggles" s={9} $w={12} /><Btn n="braces" s={9} $w={12} />
      <Space $w={160} /><Caption>切换开关/模式</Caption><Space $w={107} />
      <Btn n="hill" s={7} $w={12} /><Btn n="knob" s={9} $w={16} /><Space $w={27} /><Btn n="hill" s={12} $w={14} /><Space $w={3} />
      <DarkBar /><Space $w={17} />
    </FootBar>
  </Panel>
);

const indents = [["indL", "左缩进"], ["spB", "段前间距"], ["indF", "首行缩进"], ["indR", "右缩进"], ["spA", "段后间距"]];
const aligns = [["alignL", 18], ["alignC", 16], ["alignR", 18], ["justL", 20], ["justC", 16], ["justR", 18], ["just", 22]];

export default function App() {
  return (
    <>
      <Global />
      <Page>
        <TitleBar><AppBadge>Ae</AppBadge>Adobe After Effects CC 2015 - 无标题项目.aep *</TitleBar>
        <MenuBar>{menus.map((m) => <MenuItem key={m} type="button">{m}</MenuItem>)}</MenuBar>
        <ToolBar>
          {tools.map(([n, icon, w, s, color]) => <Btn key={n} n={n} icon={icon} s={s} $w={w} $color={color} />)}
          <Space $w={24} />
          <Btn n="axis" label="本地轴" $w={15} $color={c.dim} /><Btn n="axis" label="世界轴" $w={15} $color={c.dim} /><Btn n="cubeAxis" label="视图轴" $w={15} $color={c.dim} />
          <Space $w={13} /><CheckLabel><input type="checkbox" />对齐</CheckLabel><Space $w={18} />
          <Btn n="snap" /><Btn n="dots" $color="#2f87a5" />
          <Space /><I n="gear" s={13} /><Space $w={8} /><Caption $color={c.mid}>工作区：</Caption><Space $w={5} />
          <Drop label="工作区" options={["标准"]} size={0} $w={40} /><Space $w={184} />
        </ToolBar>
        <Upper><Project /><Composition /><RightPanels /></Upper>
        <Lower>
          <Timeline />
          <Paragraph>
            <PanelTitle $h={18}>段落 <I n="menu" s={8} /></PanelTitle>
            <AlignRow>{aligns.map(([n, w], i) => <Btn key={n} n={n} s={10} $w={w} $color={i ? "#98969a" : "#2a8fa6"} />)}</AlignRow>
            <Indents>
              {indents.map(([n, label]) => (
                <IndentField key={n}><Glyph $w={15}><I n={n} s={11} /></Glyph><input aria-label={label} defaultValue="0" />像素</IndentField>
              ))}
            </Indents>
          </Paragraph>
        </Lower>
        <Glare />
        <Watermark>邢帅教育</Watermark>
      </Page>
    </>
  );
}
